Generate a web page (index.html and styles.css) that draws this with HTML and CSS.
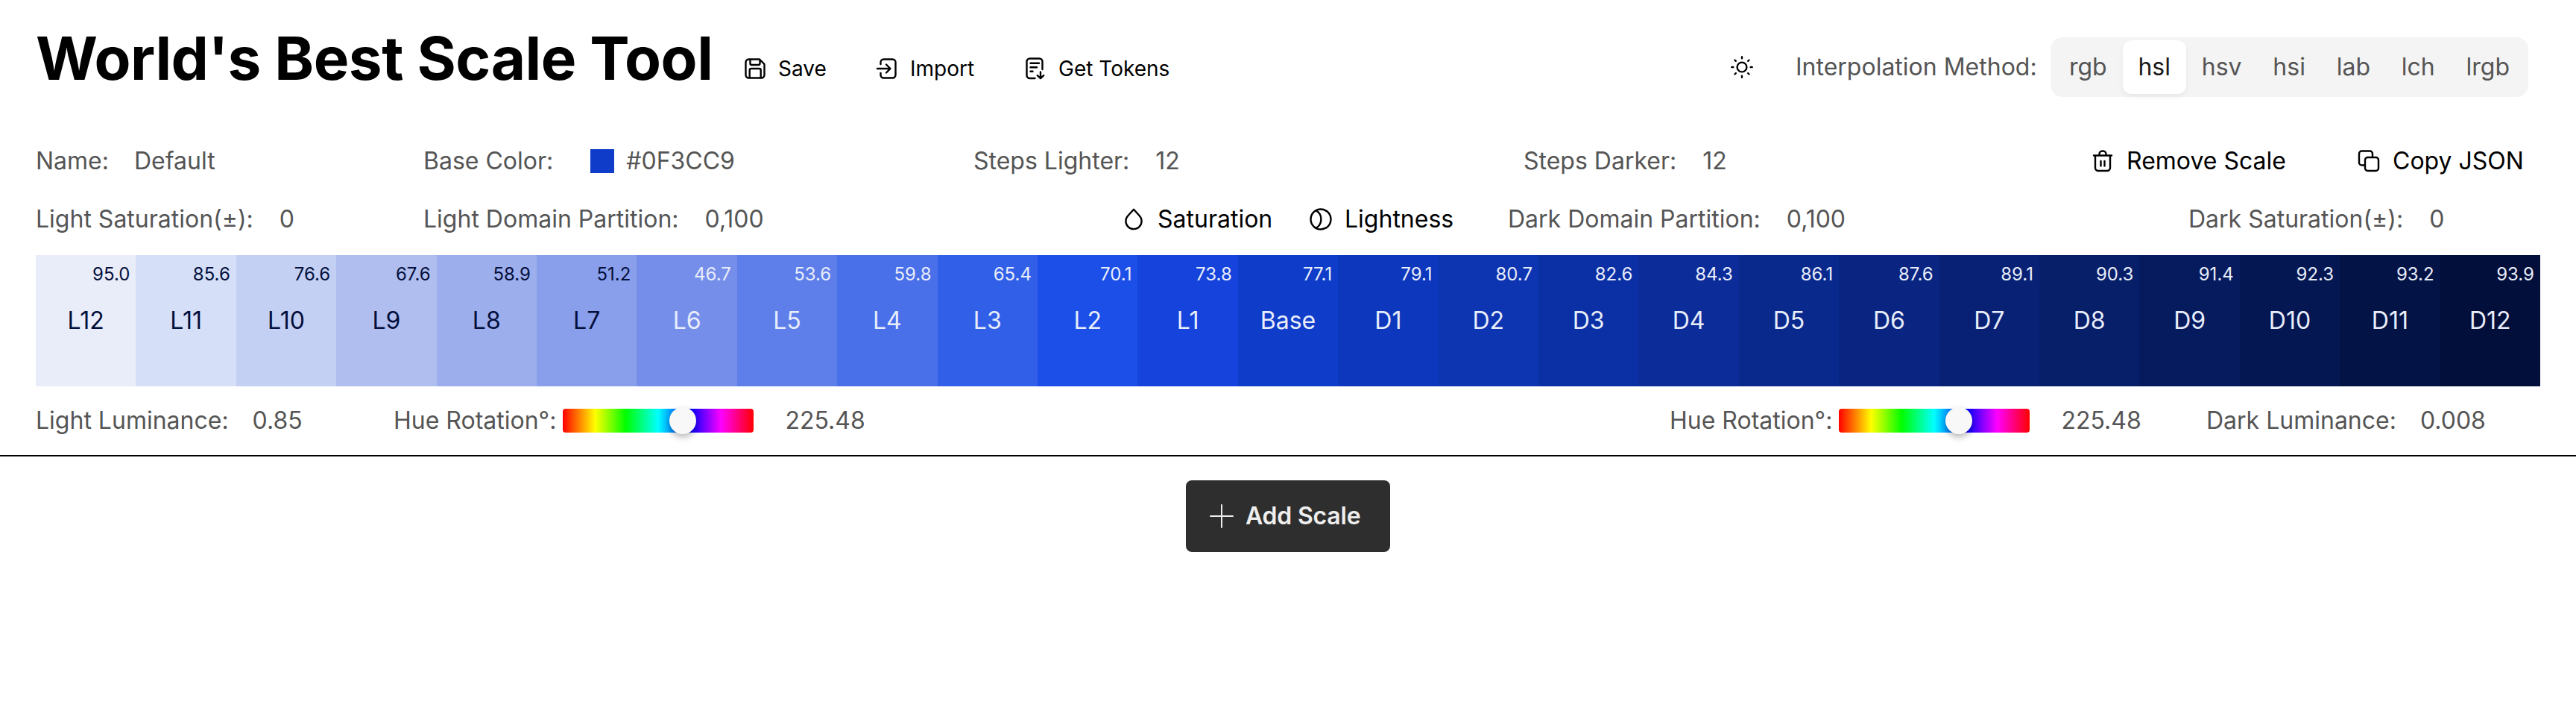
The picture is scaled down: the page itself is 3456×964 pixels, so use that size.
FILE: index.html
```
<!DOCTYPE html>
<html lang="en">
<head>
<meta charset="utf-8">
<title>World's Best Scale Tool</title>
<link rel="stylesheet" href="styles.css">
</head>
<body>
<header class="top">
  <h1 class="title">World's Best Scale Tool</h1>
  <button class="action save"><svg viewBox="0 0 32 32"><path d="M7.500 3.500H22l6.500 6.500v14.500a4 4 0 0 1-4 4h-17a4 4 0 0 1-4-4v-17a4 4 0 0 1 4-4z M8.700 28V18a2 2 0 0 1 2-2h11a2 2 0 0 1 2 2V28 M9.500 4v5a2 2 0 0 0 2 2h9a2 2 0 0 0 2-2V4"/></svg>Save</button>
  <button class="action import"><svg viewBox="0 0 32 32"><path d="M7.500 10V7.500a4 4 0 0 1 4-4h12a4 4 0 0 1 4 4v17a4 4 0 0 1-4 4h-12a4 4 0 0 1-4-4V22 M3 16h17 M15 10.500l5.500 5.500-5.500 5.500"/></svg>Import</button>
  <button class="action tokens"><svg viewBox="0 0 32 32"><path d="M16.500 29H9.500a4 4 0 0 1-4-4V6.500a4 4 0 0 1 4-4h13a4 4 0 0 1 4 4v10.500 M10.500 8.700h11.500M10.500 14.300h8.500M10.500 19.700h3M24 20.500v8.500M19.800 25.200l4.200 4 4.200-4"/></svg>Get Tokens</button>
  <svg class="sun" viewBox="0 0 32 32"><circle cx="16" cy="16" r="6.400"/><path d="M16 2.300v2M16 27.700v2M2.300 16h2M27.700 16h2M6.500 6.500l1.300 1.300M24.200 24.200l1.300 1.300M6.500 25.500l1.300-1.300M24.200 7.800l1.300-1.300"/></svg>
  <span class="method">Interpolation Method:</span>
  <div class="tabs">
    <span class="tab">rgb</span><span class="tab active">hsl</span><span class="tab">hsv</span><span class="tab">hsi</span><span class="tab">lab</span><span class="tab">lch</span><span class="tab">lrgb</span>
  </div>
</header>
<main class="scale">
  <div class="row row-main">
    <div class="field f-name"><label>Name:</label><span>Default</span></div>
    <div class="field f-base"><label>Base Color:</label><i class="swatch"></i><span>#0F3CC9</span></div>
    <div class="field f-steps"><label>Steps Lighter:</label><span>12</span></div>
    <div class="field f-dark"><label>Steps Darker:</label><span>12</span></div>
    <button class="tool remove"><svg viewBox="0 0 32 32"><path d="M4 8.500h24 M11.500 8V6.500a4 4 0 0 1 4-4h1a4 4 0 0 1 4 4V8 M6 9v16a4 4 0 0 0 4 4h12a4 4 0 0 0 4-4V9 M13.500 16v6.500M18.500 16v6.500"/></svg>Remove Scale</button>
    <button class="tool copy"><svg viewBox="0 0 32 32"><rect x="11" y="11" width="18" height="18" rx="3.500"/><path d="M11 21.500H6.500a3.500 3.500 0 0 1-3.500-3.500V6a3.500 3.500 0 0 1 3.500-3.500h11a3.500 3.500 0 0 1 3.500 3.500v5"/></svg>Copy JSON</button>
  </div>
  <div class="row row-domain">
    <div class="field f-lsat"><label>Light Saturation(±):</label><span>0</span></div>
    <div class="field f-ldom"><label>Light Domain Partition:</label><span>0,100</span></div>
    <button class="tool saturation"><svg viewBox="0 0 32 32"><path d="M16 2.800L8.300 11.200a10.600 10.600 0 1 0 15.400 0z"/></svg>Saturation</button>
    <button class="tool lightness"><svg viewBox="0 0 32 32"><circle cx="16" cy="16" r="13.500"/><path d="M10 4.500c8.500 5 8.500 18 0 23"/></svg>Lightness</button>
    <div class="field f-ddom"><label>Dark Domain Partition:</label><span>0,100</span></div>
    <div class="field f-dsat"><label>Dark Saturation(±):</label><span>0</span></div>
  </div>
  <div class="strip" id="strip"></div>
  <div class="row row-hue">
    <div class="field f-llum"><label>Light Luminance:</label><span>0.85</span></div>
    <div class="field f-hue"><label>Hue Rotation°:</label><div class="slider"><i class="thumb"></i></div><span>225.48</span></div>
    <div class="field f-hue2"><label>Hue Rotation°:</label><div class="slider"><i class="thumb"></i></div><span>225.48</span></div>
    <div class="field f-dlum"><label>Dark Luminance:</label><span>0.008</span></div>
  </div>
</main>
<div class="footer"><button class="add"><svg viewBox="0 0 32 32"><path d="M16 1v30M1 16h30"/></svg>Add Scale</button></div>
<script src="script.js"></script>
</body>
</html>
```
FILE: styles.css
```
* { box-sizing: border-box; }
body { margin: 0; background: #fff; color: #000; font: 32px/48px Inter, "Liberation Sans", sans-serif; white-space: nowrap; }
button { font: inherit; color: #000; background: none; border: 0; padding: 0; margin: 0; display: flex; align-items: center; }
svg { width: 32px; height: 32px; flex: none; fill: none; stroke: currentColor; stroke-width: 2.4; stroke-linecap: round; stroke-linejoin: round; }
.top { display: flex; height: 180px; align-items: flex-start; padding-left: 48px; }
.title { margin: 0; width: 949px; font-size: 80px; line-height: 96px; font-weight: 700; padding-top: 30px; letter-spacing: -0.5px; }
.action { height: 48px; margin-top: 68px; font-size: 28px; gap: 15px; }
.save { width: 177px; }
.import { width: 198px; }
.tokens { width: 940px; gap: 16px; }
.sun { margin: 74px 56px 0 9px; }
.method { color: #555; margin-top: 66px; width: 342px; }
.tabs { display: flex; margin-top: 50px; height: 80px; padding: 4px; background: #f4f4f4; border-radius: 16px; color: #555; }
.tab { padding: 0 20.900px; line-height: 72px; }
.tab.active { background: #fff; color: #1a1a1a; border-radius: 12px; box-shadow: 0 4px 8px rgba(0,0,0,.05); }
.scale { border-bottom: 2px solid #000; padding-left: 48px; height: 432px; }
.row { display: flex; align-items: center; }
.row-main { height: 72px; }
.row-domain { height: 84px; }
.row-hue { height: 92px; }
.field { display: flex; align-items: center; color: #555; }
.field > span { margin-left: 35px; }
.field > .swatch { width: 32px; height: 32px; background: #0f3cc9; margin-left: 50px; }
.field > .swatch + span { margin-left: 16px; }
.tool { gap: 16px; }
.f-name { width: 520px; }
.f-name > span { margin-left: 34px; }
.f-base, .f-steps { width: 738px; }
.f-dark { width: 761px; }
.remove { width: 357px; }
.f-lsat { width: 520px; }
.f-ldom { width: 937px; }
.saturation { width: 251px; }
.lightness { width: 267px; }
.f-ddom { width: 913px; }
.strip { display: grid; grid-template-columns: repeat(25, 1fr); width: 3360px; height: 176px; margin-top: 6px; }
.chip { color: #e8edfa; text-align: center; }
.chip.ink { color: #030f3b; }
.ratio { display: block; text-align: right; font-size: 24px; line-height: 36px; padding: 8px 8px 0 0; }
.step { display: block; margin-top: 20px; }
.f-llum { width: 480px; }
.f-llum > span, .f-dlum > span { margin-left: 32px; }
.slider { position: relative; width: 256px; height: 32px; margin-left: 9px; border-radius: 4px; background: linear-gradient(to right, #f00 0%, #ff0 17%, #0f0 33%, #0ff 50%, #00f 67%, #f0f 83%, #f00 100%); }
.thumb { position: absolute; left: 143px; top: -2px; width: 36px; height: 36px; border-radius: 50%; background: #f8f8f8; box-shadow: 0 4px 8px rgba(0,0,0,.28); }
.field > .slider + span { margin-left: 42px; }
.f-hue { width: 1712px; }
.f-hue2 { width: 720px; }
.footer { display: flex; justify-content: center; padding-top: 32px; }
.add { width: 274px; height: 96px; padding-left: 32px; gap: 16px; border-radius: 8px; background: #2e2e2e; color: #eee; font-weight: 600; letter-spacing: -0.2px; }
.add svg { stroke-width: 2; }
```
FILE: script.js
```
const steps = [
  ["L12", "95.0", "#e9edfa"], ["L11", "85.6", "#d5dff8"], ["L10", "76.6", "#c3cff3"],
  ["L9", "67.6", "#b0beef"], ["L8", "58.9", "#9daeed"], ["L7", "51.2", "#8a9feb"],
  ["L6", "46.7", "#758eea"], ["L5", "53.6", "#5e7fe9"], ["L4", "59.8", "#496fe9"],
  ["L3", "65.4", "#325fe8"], ["L2", "70.1", "#1c4ee8"], ["L1", "73.8", "#1543dc"],
  ["Base", "77.1", "#0f3cc9"], ["D1", "79.1", "#0d38bd"], ["D2", "80.7", "#0d34b1"],
  ["D3", "82.6", "#0b30a5"], ["D4", "84.3", "#0c2c99"], ["D5", "86.1", "#09298d"],
  ["D6", "87.6", "#0a2581"], ["D7", "89.1", "#082175"], ["D8", "90.3", "#071e69"],
  ["D9", "91.4", "#061b5e"], ["D10", "92.3", "#051752"], ["D11", "93.2", "#041346"],
  ["D12", "93.9", "#030f3b"]
];
const strip = document.getElementById("strip");
steps.forEach(([name, ratio, color], i) => {
  const chip = document.createElement("div");
  chip.className = i < 6 ? "chip ink" : "chip";
  chip.style.background = color;
  chip.innerHTML = `<span class="ratio">${ratio}</span><span class="step">${name}</span>`;
  strip.append(chip);
});
```
